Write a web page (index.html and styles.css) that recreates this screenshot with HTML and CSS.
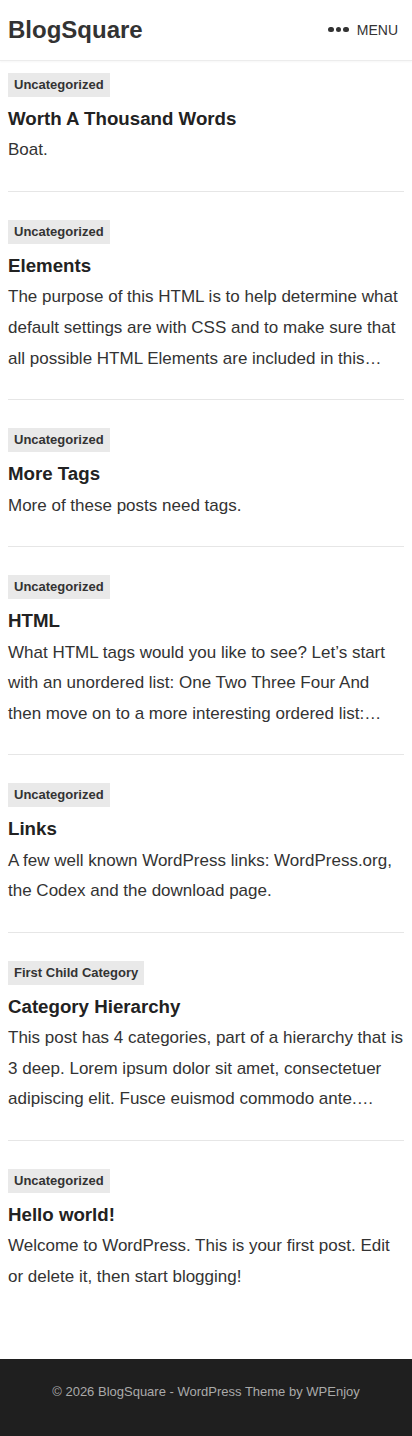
FILE: index.html
```html
<!DOCTYPE html>
<html lang="en">
<head>
<meta charset="utf-8">
<meta name="viewport" content="width=device-width, initial-scale=1">
<title>BlogSquare</title>
<link rel="stylesheet" href="styles.css">
</head>
<body>
<header class="site-header">
  <a class="site-title" href="#">BlogSquare</a>
  <button class="menu-toggle"><span class="dots"><i></i><i></i><i></i></span>MENU</button>
</header>
<main class="posts">
  <article class="post">
    <span class="cat">Uncategorized</span>
    <h2 class="post-title">Worth A Thousand Words</h2>
    <p class="excerpt">Boat.</p>
  </article>
  <article class="post">
    <span class="cat">Uncategorized</span>
    <h2 class="post-title">Elements</h2>
    <p class="excerpt">The purpose of this HTML is to help determine what default settings are with CSS and to make sure that all possible HTML Elements are included in this…</p>
  </article>
  <article class="post">
    <span class="cat">Uncategorized</span>
    <h2 class="post-title">More Tags</h2>
    <p class="excerpt">More of these posts need tags.</p>
  </article>
  <article class="post">
    <span class="cat">Uncategorized</span>
    <h2 class="post-title">HTML</h2>
    <p class="excerpt">What HTML tags would you like to see? Let’s start with an unordered list: One Two Three Four And then move on to a more interesting ordered list:…</p>
  </article>
  <article class="post">
    <span class="cat">Uncategorized</span>
    <h2 class="post-title">Links</h2>
    <p class="excerpt">A few well known WordPress links: WordPress.org, the Codex and the download page.</p>
  </article>
  <article class="post">
    <span class="cat">First Child Category</span>
    <h2 class="post-title">Category Hierarchy</h2>
    <p class="excerpt">This post has 4 categories, part of a hierarchy that is 3 deep. Lorem ipsum dolor sit amet, consectetuer adipiscing elit. Fusce euismod commodo ante.…</p>
  </article>
  <article class="post last">
    <span class="cat">Uncategorized</span>
    <h2 class="post-title">Hello world!</h2>
    <p class="excerpt">Welcome to WordPress. This is your first post. Edit or delete it, then start blogging!</p>
  </article>
</main>
<footer class="site-footer">© 2026 BlogSquare - WordPress Theme by WPEnjoy</footer>
</body>
</html>
```
FILE: styles.css
```css
* { box-sizing: border-box; }
html, body { margin: 0; padding: 0; }
body {
  font-family: "Liberation Sans", Arial, sans-serif;
  color: #333;
  background: #fff;
}
.site-header {
  height: 61px;
  display: flex;
  align-items: center;
  justify-content: space-between;
  padding: 0 8px 1px 8px;
  border-bottom: 1px solid #ececec;
  box-shadow: 0 1px 2px rgba(0,0,0,0.04);
}
.site-title {
  font-size: 24px;
  font-weight: bold;
  color: #333;
  text-decoration: none;
  line-height: 30px;
}
.menu-toggle {
  display: flex;
  align-items: center;
  gap: 8px;
  border: 0;
  background: none;
  font-family: "Liberation Sans", Arial, sans-serif;
  font-size: 14px;
  color: #333;
  padding: 0 6px 0 0;
  cursor: pointer;
}
.dots { display: flex; gap: 2px; }
.dots i {
  display: block;
  width: 5.5px;
  height: 5.5px;
  border-radius: 50%;
  background: #333;
}
.posts {
  padding: 12px 8px 41px;
}
.post {
  padding-bottom: 25px;
  border-bottom: 1px solid #e6e6e6;
  margin-bottom: 28px;
}
.post.last { border-bottom: 0; margin-bottom: 0; }
.cat {
  display: inline-block;
  vertical-align: top;
  background: #e9e9e9;
  color: #333;
  font-size: 13px;
  font-weight: bold;
  line-height: 18px;
  padding: 3px 6px;
}
.post-title {
  margin: 10px 0 4.4px;
  font-size: 18.7px;
  line-height: 24px;
  font-weight: bold;
  color: #222;
}
.excerpt {
  margin: 0;
  font-size: 17px;
  line-height: 1.8;
  color: #333;
}
.site-footer {
  background: #1f1f1f;
  color: #aaa;
  font-size: 13px;
  text-align: center;
  height: 78px;
  padding-top: 24px;
  line-height: 17px;
}
```
